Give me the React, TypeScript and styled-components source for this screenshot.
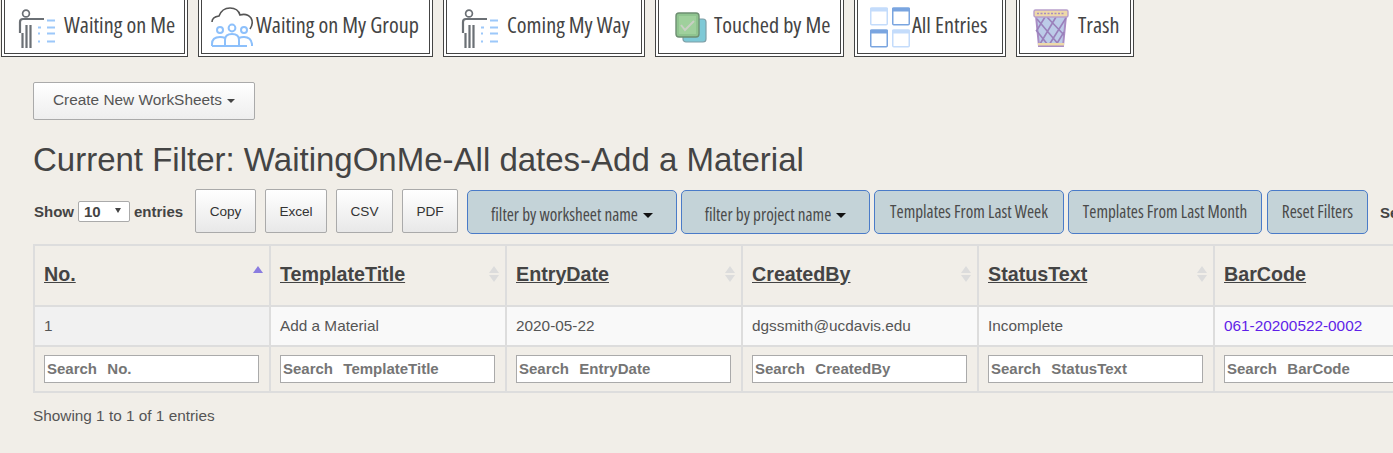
import React from "react";
import styled, { createGlobalStyle } from "styled-components";

const narrow = `"Open Sans", sans-serif`;
const arial = `"Liberation Sans", Arial, sans-serif`;

const GlobalStyle = createGlobalStyle`
  html, body {
    margin: 0;
    padding: 0;
    background: #f1eee8;
    overflow: hidden;
  }
  body {
    width: 1393px;
    height: 453px;
    font-family: ${arial};
    color: #444;
  }
`;

const TabBar = styled.nav`
  display: flex;
  height: 57px;
  padding-left: 1px;
`;

const Tab = styled.a<{ $width: number; $gap: number; $pad: number }>`
  box-sizing: border-box;
  width: ${(p) => p.$width}px;
  margin-right: ${(p) => p.$gap}px;
  padding-left: ${(p) => p.$pad}px;
  display: flex;
  align-items: center;
  background: #fff;
  border: 4px double #444;
  border-top: 0;
  font-family: ${narrow};
  font-stretch: 75%;
  font-size: 22.2px;
  font-weight: 500;
  color: #444;
  white-space: nowrap;
  svg {
    flex: none;
  }
`;

const TabLabel = styled.span<{ $offset: number }>`
  margin-left: ${(p) => p.$offset}px;
  margin-bottom: 5px;
`;

const Content = styled.main`
  padding: 25px 0 0 33px;
  width: 1360px;
`;

const Dropdown = styled.button`
  display: block;
  box-sizing: border-box;
  width: 222px;
  height: 38px;
  padding: 0 0 2px;
  background: linear-gradient(#fff, #eee);
  border: 1px solid #aaa;
  border-radius: 2px;
  font-family: ${arial};
  font-size: 15.4px;
  color: #555;
`;

const Caret = styled.span<{ $size?: number; $color?: string }>`
  display: inline-block;
  margin-left: 5px;
  vertical-align: ${(p) => (p.$size ? 3 : 2)}px;
  border-top: ${(p) => p.$size ?? 4}px solid ${(p) => p.$color ?? "#444"};
  border-left: ${(p) => p.$size ?? 4}px solid transparent;
  border-right: ${(p) => p.$size ?? 4}px solid transparent;
`;

const Title = styled.h2`
  margin: 21px 0 0;
  height: 37px;
  font-family: ${arial};
  font-size: 33px;
  line-height: 37px;
  font-weight: 400;
  color: #444;
  white-space: nowrap;
`;

const Toolbar = styled.div`
  display: flex;
  align-items: flex-start;
  margin-top: 11px;
  height: 55px;
  white-space: nowrap;
  & > * {
    flex: none;
  }
`;

const Length = styled.label`
  display: flex;
  align-items: center;
  box-sizing: border-box;
  width: 162px;
  height: 44px;
  padding-left: 1px;
  gap: 4px;
  font-size: 15px;
  font-weight: 700;
  color: #444;
`;

const FakeSelect = styled.span`
  box-sizing: border-box;
  display: flex;
  align-items: center;
  justify-content: space-between;
  width: 52px;
  height: 21px;
  padding: 0 8px 0 5px;
  background: #fff;
  border: 1px solid #aaa;
  border-radius: 2px;
  font-size: 15px;
  font-weight: 700;
  &::after {
    content: "";
    border-top: 5px solid #444;
    border-left: 3px solid transparent;
    border-right: 3px solid transparent;
    margin-bottom: 2px;
  }
`;

const ExportButton = styled.button<{ $width: number }>`
  box-sizing: border-box;
  width: ${(p) => p.$width}px;
  height: 44px;
  margin-right: 9px;
  padding: 0;
  background: linear-gradient(#fff, #e8e8e8);
  border: 1px solid #aaa;
  border-radius: 2px;
  font-family: ${arial};
  font-size: 13.6px;
  color: #333;
`;

const FilterButton = styled.button<{ $width: number; $gap?: number; $drop?: boolean }>`
  box-sizing: border-box;
  width: ${(p) => p.$width}px;
  height: 44px;
  margin-top: 1px;
  margin-right: ${(p) => p.$gap ?? 4}px;
  padding: ${(p) => (p.$drop ? "4px 0 0" : "0 0 2px")};
  background: #c4d3d8;
  border: 1px solid #4a7bc8;
  border-radius: 5px;
  font-family: ${narrow};
  font-stretch: 75%;
  font-size: 17.2px;
  color: #4a4a4a;
  white-space: nowrap;
`;

const SearchLabel = styled.span`
  margin: 15px 0 0 8px;
  font-size: 15px;
  font-weight: 700;
  color: #444;
`;

const Table = styled.table`
  border-collapse: collapse;
  table-layout: fixed;
  width: 1418px;
`;

const Th = styled.th`
  position: relative;
  box-sizing: border-box;
  height: 61px;
  padding: 0 0 3px 9px;
  border: 2px solid #ddd;
  text-align: left;
  font-size: 19.7px;
  font-weight: 700;
  color: #444;
  text-decoration: underline;
`;

const SortIcon = styled.span<{ $active?: boolean }>`
  position: absolute;
  right: 6px;
  top: 20px;
  width: 10px;
  height: 16px;
  &::before,
  &::after {
    content: "";
    position: absolute;
    left: 0;
    border-left: 5px solid transparent;
    border-right: 5px solid transparent;
  }
  &::before {
    top: 0;
    border-bottom: 7px solid ${(p) => (p.$active ? "#8a7ce0" : "#dcdcdc")};
  }
  &::after {
    bottom: 0;
    border-top: 7px solid ${(p) => (p.$active ? "transparent" : "#dcdcdc")};
  }
`;

const Td = styled.td<{ $sorted?: boolean }>`
  box-sizing: border-box;
  height: 40px;
  padding: 0 0 0 9px;
  border: 2px solid #ddd;
  background: ${(p) => (p.$sorted ? "#f1f1f1" : "#f9f9f9")};
  font-size: 15.35px;
  color: #555;
  white-space: nowrap;
`;

const BarLink = styled.a`
  color: #5f1fe8;
`;

const SearchCell = styled.td`
  box-sizing: border-box;
  height: 46px;
  padding: 0 0 0 9px;
  border: 2px solid #ddd;
`;

const SearchInput = styled.input`
  display: block;
  box-sizing: border-box;
  width: 215px;
  height: 28px;
  padding: 0 2px 2px;
  background: #fff;
  border: 1px solid #aaa;
  font-family: ${arial};
  font-size: 15px;
  font-weight: 700;
  word-spacing: 1px;
  &::placeholder {
    color: #757575;
    opacity: 1;
  }
`;

const Info = styled.div`
  margin-top: 14px;
  font-size: 15.35px;
  color: #555;
`;

const PointingIcon = () => (
  <svg width="38" height="42" viewBox="0 0 38 42">
    <circle cx="8" cy="7.5" r="3.4" fill="none" stroke="#6b7075" strokeWidth="1.7" />
    <path d="M2 27V16q0-3 3-3h21" fill="none" stroke="#6b7075" strokeWidth="2.2" />
    <path d="M4.5 27v15M8.5 19v23M12.5 19v23" stroke="#6b7075" strokeWidth="2.2" />
    <path d="M29 14.5h8M29 21.5h8M29 27.5h8M29 35.5h8" stroke="#9cc8fa" strokeWidth="2.2" />
    <path d="M20 21.5h3M20 27.5h2M20 35.5h2" stroke="#9cc8fa" strokeWidth="2" />
  </svg>
);

const GroupIcon = () => (
  <svg width="44" height="44" viewBox="0 0 44 44">
    <path
      d="M1 17q0-5 7-6q3-8 11-8q8 0 10 7q7-2 11 3q3 5-1 11"
      fill="none"
      stroke="#555"
      strokeWidth="1.6"
    />
    <g fill="none" stroke="#8dc0fb" strokeWidth="2">
      <circle cx="9" cy="25" r="3" />
      <circle cx="21" cy="23" r="3.4" />
      <circle cx="33" cy="25" r="3" />
      <path d="M14 41v-6q0-6 7-6q7 0 7 6v6" />
      <path d="M1 41v-2q0-7 8-7q3 0 5 1M1 41h35M33 32q7 0 8 7v2M28 33q2-1 5-1" />
    </g>
  </svg>
);

const CheckIcon = () => (
  <svg width="32" height="32" viewBox="0 -1 32 32">
    <rect x="8" y="7" width="23" height="23" rx="3" fill="#7ec9d6" stroke="#7f9ea6" strokeWidth="1.2" />
    <rect x="1" y="1" width="23" height="24" rx="3" fill="#8fc48f" stroke="#6e8f72" strokeWidth="1.4" />
    <rect x="4" y="4" width="17" height="18" fill="#9fd09c" />
    <path d="M6 13l4 5l9-9" fill="none" stroke="#c9cfc4" strokeWidth="2" />
  </svg>
);

const Win = ({ x, y, dark }: { x: number; y: number; dark: boolean }) => (
  <g>
    <rect
      x={x + 0.75}
      y={y + 0.75}
      width="16.5"
      height="16.5"
      rx="1"
      fill="#fff"
      stroke={dark ? "#7aa5e0" : "#c4dcfb"}
      strokeWidth="1.5"
    />
    <rect x={x} y={y} width="18" height="4" rx="1" fill={dark ? "#7aa5e0" : "#c4dcfb"} />
  </g>
);

const GridIcon = () => (
  <svg width="42" height="42" viewBox="0 0 42 42">
    <Win x={1} y={1.5} dark={false} />
    <Win x={23} y={1.5} dark />
    <Win x={1} y={23.5} dark />
    <Win x={23} y={23.5} dark={false} />
  </svg>
);

const TrashIcon = () => (
  <svg width="36" height="40" viewBox="0 -1 36 40">
    <path d="M3 8l3 30h24l3-30z" fill="#bccbe8" stroke="#a98dc4" strokeWidth="2" />
    <path
      d="M4 11l22 26M14 9l17 18M3 22l12 15M23 9L7 36M33 10L16 37M12 9L4 22M31 24l-8 13"
      fill="none"
      stroke="#9a80bb"
      strokeWidth="1.6"
    />
    <rect x="1" y="2" width="34" height="7" rx="1.5" fill="#eed9a8" stroke="#b9a0cc" strokeWidth="1.4" />
    <path d="M4 5.5h28" stroke="#a78cc0" strokeWidth="1.4" strokeDasharray="2 1.5" />
    <rect x="5" y="35" width="26" height="2.5" fill="#eed9a8" />
  </svg>
);

const tabs = [
  { label: "Waiting on Me", width: 187, gap: 10, pad: 13, offset: 8, icon: <PointingIcon /> },
  { label: "Waiting on My Group", width: 235, gap: 10, pad: 9, offset: 1, icon: <GroupIcon /> },
  { label: "Coming My Way", width: 202, gap: 10, pad: 14, offset: 8, icon: <PointingIcon /> },
  { label: "Touched by Me", width: 189, gap: 10, pad: 16, offset: 7, icon: <CheckIcon /> },
  { label: "All Entries", width: 152, gap: 10, pad: 11, offset: 1, icon: <GridIcon /> },
  { label: "Trash", width: 118, gap: 0, pad: 13, offset: 9, icon: <TrashIcon /> },
];

const columns = ["No.", "TemplateTitle", "EntryDate", "CreatedBy", "StatusText", "BarCode"];

const exportsList = [
  { label: "Copy", width: 61 },
  { label: "Excel", width: 62 },
  { label: "CSV", width: 57 },
  { label: "PDF", width: 56 },
];

const App = () => {
  return (
    <>
      <GlobalStyle />
      <TabBar>
        {tabs.map((t) => (
          <Tab key={t.label} $width={t.width} $gap={t.gap} $pad={t.pad}>
            {t.icon}
            <TabLabel $offset={t.offset}>{t.label}</TabLabel>
          </Tab>
        ))}
      </TabBar>
      <Content>
        <Dropdown>
          Create New WorkSheets
          <Caret />
        </Dropdown>
        <Title>Current Filter: WaitingOnMe-All dates-Add a Material</Title>
        <Toolbar>
          <Length>
            Show <FakeSelect>10</FakeSelect> entries
          </Length>
          {exportsList.map((b) => (
            <ExportButton key={b.label} $width={b.width}>
              {b.label}
            </ExportButton>
          ))}
          <FilterButton $width={210} $drop>
            filter by worksheet name
            <Caret $size={5} $color="#111" />
          </FilterButton>
          <FilterButton $width={189} $drop>
            filter by project name
            <Caret $size={5} $color="#111" />
          </FilterButton>
          <FilterButton $width={190}>Templates From Last Week</FilterButton>
          <FilterButton $width={194} $gap={5}>
            Templates From Last Month
          </FilterButton>
          <FilterButton $width={101}>Reset Filters</FilterButton>
          <SearchLabel>Search:</SearchLabel>
        </Toolbar>
        <Table>
          <thead>
            <tr>
              {columns.map((c, i) => (
                <Th key={c}>
                  {c}
                  <SortIcon $active={i === 0} />
                </Th>
              ))}
            </tr>
          </thead>
          <tbody>
            <tr>
              <Td $sorted>1</Td>
              <Td>Add a Material</Td>
              <Td>2020-05-22</Td>
              <Td>dgssmith@ucdavis.edu</Td>
              <Td>Incomplete</Td>
              <Td>
                <BarLink>061-20200522-0002</BarLink>
              </Td>
            </tr>
            <tr>
              {columns.map((c) => (
                <SearchCell key={c}>
                  <SearchInput placeholder={`Search  ${c}`} />
                </SearchCell>
              ))}
            </tr>
          </tbody>
        </Table>
        <Info>Showing 1 to 1 of 1 entries</Info>
      </Content>
    </>
  );
};

export default App;
